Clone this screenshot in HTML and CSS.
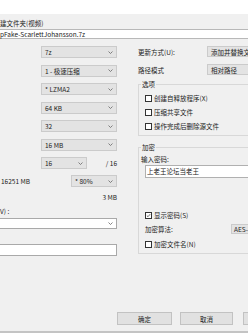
FILE: index.html
```html
<!DOCTYPE html>
<html lang="zh-CN">
  <head>
    <meta charset="UTF-8" />
    <meta name="viewport" content="width=device-width, initial-scale=1.0" />
    <title>添加到压缩包</title>
    <link rel="stylesheet" href="styles.css">
  </head>
  <body>
    <div class="window">
      <div class="titlebar"></div>

      <div class="dest">
        <div class="dest-label">建文件夹(视频)</div>
        <div class="dest-input">pFake-ScarlettJohansson.7z</div>
      </div>

      <div class="main">
        <div class="left">
          <div class="select"><span>7z</span><svg class="chev" viewBox="0 0 5 3"><path d="M0.5 0.5 L2.5 2.5 L4.5 0.5" /></svg></div>
          <div class="select"><span>1 - 极速压缩</span><svg class="chev" viewBox="0 0 5 3"><path d="M0.5 0.5 L2.5 2.5 L4.5 0.5" /></svg></div>
          <div class="select"><span>* LZMA2</span><svg class="chev" viewBox="0 0 5 3"><path d="M0.5 0.5 L2.5 2.5 L4.5 0.5" /></svg></div>
          <div class="select"><span>64 KB</span><svg class="chev" viewBox="0 0 5 3"><path d="M0.5 0.5 L2.5 2.5 L4.5 0.5" /></svg></div>
          <div class="select"><span>32</span><svg class="chev" viewBox="0 0 5 3"><path d="M0.5 0.5 L2.5 2.5 L4.5 0.5" /></svg></div>
          <div class="select"><span>16 MB</span><svg class="chev" viewBox="0 0 5 3"><path d="M0.5 0.5 L2.5 2.5 L4.5 0.5" /></svg></div>
          <div class="threads">
            <div class="select short"><span>16</span><svg class="chev" viewBox="0 0 5 3"><path d="M0.5 0.5 L2.5 2.5 L4.5 0.5" /></svg></div>
            <span class="of">/ 16</span>
          </div>
          <div class="memory">
            <span>16251 MB</span>
            <div class="select ratio"><span>* 80%</span><svg class="chev" viewBox="0 0 5 3"><path d="M0.5 0.5 L2.5 2.5 L4.5 0.5" /></svg></div>
          </div>
          <div class="size">3 MB</div>
          <div class="param-label">V) :</div>
          <div class="select white"><span></span><svg class="chev" viewBox="0 0 5 3"><path d="M0.5 0.5 L2.5 2.5 L4.5 0.5" /></svg></div>
          <div class="textbox"></div>
        </div>

        <div class="right">
          <div class="field">
            <span class="field-label">更新方式(U):</span>
            <div class="select wide"><span>添加并替换文件</span></div>
          </div>
          <div class="field second">
            <span class="field-label">路径模式</span>
            <div class="select wide"><span>相对路径</span></div>
          </div>

          <fieldset class="group options">
            <legend>选项</legend>
            <div class="check"><span class="box"></span>创建自释放程序(X)</div>
            <div class="check"><span class="box"></span>压缩共享文件</div>
            <div class="check"><span class="box"></span>操作完成后删除源文件</div>
          </fieldset>

          <fieldset class="group crypt">
            <legend>加密</legend>
            <div class="pw-label">输入密码:</div>
            <div class="pw-box">上老王论坛当老王</div>
            <div class="check show-pw"><span class="box"><svg viewBox="0 0 7 7"><path d="M1.2 3.6 L2.8 5.2 L5.9 1.6" /></svg></span>显示密码(S)</div>
            <div class="method">
              <span class="field-label">加密算法:</span>
              <div class="select aes"><span>AES-256</span></div>
            </div>
            <div class="check names"><span class="box"></span>加密文件名(N)</div>
          </fieldset>
        </div>
      </div>

      <div class="buttons">
        <button class="ok">确定</button>
        <button class="cancel">取消</button>
        <button class="help">帮助</button>
      </div>
    </div>
  </body>
</html>
```

FILE: styles.css
```css
body {
  margin: 0;
  font-family: "Noto Sans CJK SC", "Liberation Sans", sans-serif;
  font-size: 6.5px;
  color: #222;
  background-color: #f0f0f0;
}

.window {
  width: 248px;
  height: 333px;
  box-sizing: border-box;
  background-color: #f0f0f0;
  border-bottom: 2px solid #c4c4c4;
  overflow: hidden;
  display: flex;
  flex-direction: column;
}

.titlebar {
  height: 14px;
  flex-shrink: 0;
  background-color: #fff;
}

.dest {
  padding-top: 5px;
}

.dest-label {
  height: 9px;
  line-height: 9px;
  white-space: nowrap;
}

.dest-input {
  margin-top: 1px;
  margin-left: -10px;
  width: 280px;
  height: 10px;
  box-sizing: border-box;
  padding-left: 9px;
  line-height: 8px;
  background-color: #fff;
  border: 1px solid #b8b8b8;
  white-space: nowrap;
}

.main {
  display: flex;
}

/* left column */
.left {
  width: 117px;
  flex-shrink: 0;
  padding-top: 7px;
  display: flex;
  flex-direction: column;
  align-items: flex-end;
}

.select {
  width: 76px;
  height: 12px;
  box-sizing: border-box;
  padding: 0 3px;
  display: flex;
  align-items: center;
  background-color: #e3e3e3;
  border: 1px solid #cbcbcb;
  white-space: nowrap;
  overflow: hidden;
}

.chev {
  width: 5px;
  height: 3px;
  margin-left: auto;
  flex-shrink: 0;
}

.chev path {
  fill: none;
  stroke: #666;
  stroke-width: 0.8;
}

.left > .select + .select,
.left > .threads {
  margin-top: 6.5px;
}

.threads {
  width: 76px;
  display: flex;
  align-items: center;
  justify-content: space-between;
}

.select.short {
  width: 46px;
}

.memory {
  width: 116px;
  margin-top: 6px;
  display: flex;
  align-items: center;
  justify-content: space-between;
}

.select.ratio {
  width: 46px;
}

.size {
  margin-top: 6px;
  height: 8px;
  line-height: 8px;
}

.param-label {
  align-self: flex-start;
  margin-top: 6px;
  height: 8px;
  line-height: 8px;
}

.select.white {
  width: 127px;
  margin-top: 3px;
  height: 11px;
  background-color: #fff;
  border-color: #a9a9a9;
}

.textbox {
  width: 127px;
  margin-top: 15px;
  height: 12px;
  box-sizing: border-box;
  background-color: #fff;
  border: 1px solid #a9a9a9;
}

/* right column */
.right {
  margin-left: 21px;
  width: 170px;
  flex-shrink: 0;
  padding-top: 7px;
}

.field {
  display: flex;
  align-items: center;
}

.field.second {
  margin-top: 7px;
}

.field-label {
  width: 69px;
  flex-shrink: 0;
  white-space: nowrap;
}

.select.wide {
  width: 60px;
  height: 11px;
}

.group {
  margin: 0;
  padding: 0 0 5px 6px;
  border: 1px solid #d8d8d8;
  min-width: 0;
}

.group legend {
  margin-left: -4px;
  padding: 0 1px;
  height: 8px;
  line-height: 8px;
}

.options {
  margin-top: 5px;
}

.check {
  display: flex;
  align-items: center;
  height: 8px;
  line-height: 8px;
  white-space: nowrap;
  margin-top: 6px;
}

.box {
  width: 7px;
  height: 7px;
  box-sizing: border-box;
  margin-right: 2px;
  border: 1px solid #333;
  background-color: #fff;
  display: flex;
}

.box svg {
  width: 5px;
  height: 5px;
}

.box path {
  fill: none;
  stroke: #222;
  stroke-width: 0.9;
}

.crypt {
  margin-top: 7px;
}

.pw-label {
  margin-top: 4px;
  margin-left: -4px;
  height: 8px;
  line-height: 8px;
}

.pw-box {
  margin-top: 2px;
  height: 13px;
  box-sizing: border-box;
  padding-left: 1px;
  line-height: 11px;
  background-color: #fff;
  border: 1px solid #b0b0b0;
  white-space: nowrap;
}

.check.show-pw {
  margin-top: 33px;
}

.method {
  margin-top: 5px;
  display: flex;
  align-items: center;
  height: 10px;
}

.method .field-label {
  width: 86px;
}

.select.aes {
  width: 40px;
  height: 10px;
  padding: 0 2px;
}

.check.names {
  margin-top: 6px;
}

/* buttons */
.buttons {
  margin-top: auto;
  margin-bottom: 6px;
  padding-left: 117px;
  display: flex;
}

button {
  height: 13px;
  padding: 0;
  font-family: inherit;
  font-size: 6.5px;
  color: #222;
  background-color: #e1e1e1;
  border: 1px solid #c2c2c2;
  flex-shrink: 0;
}

.ok {
  width: 55px;
}

.cancel {
  width: 53px;
  margin-left: 8px;
}

.help {
  width: 55px;
  margin-left: 10px;
}
```
